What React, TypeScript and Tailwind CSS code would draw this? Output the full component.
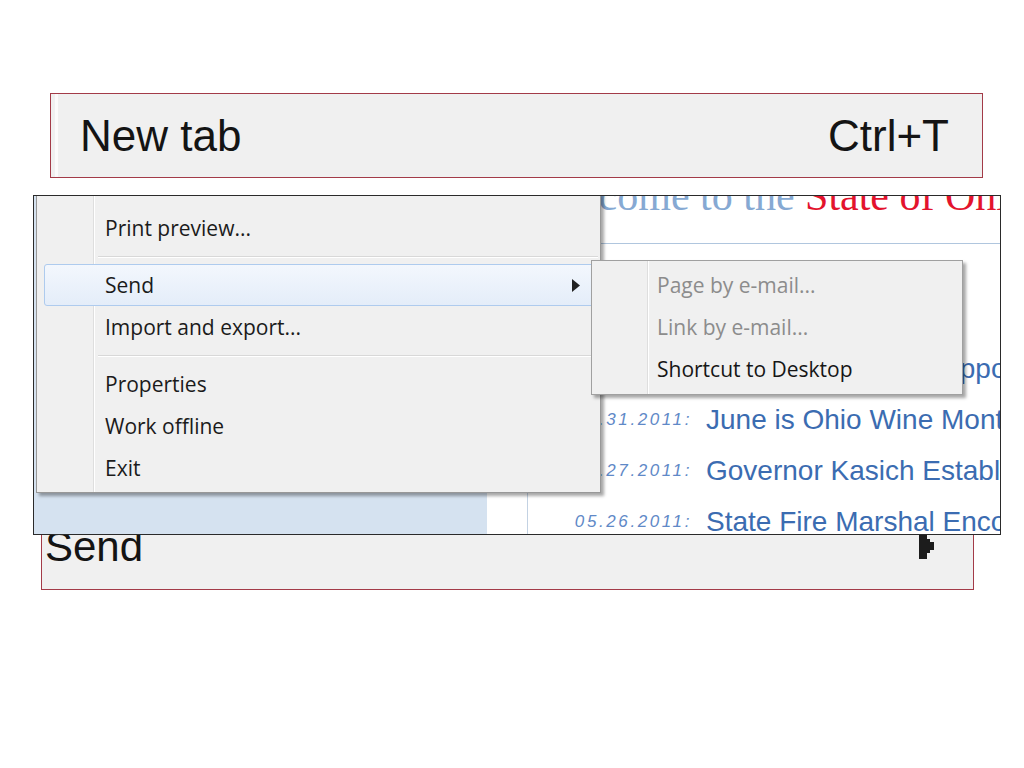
import React from "react";

const menuFont = "font-['Open_Sans',sans-serif]";

const MenuItem: React.FC<{ label: string; active?: boolean; arrow?: boolean }> = ({
  label,
  active,
  arrow,
}) => (
  <div
    className={
      "relative flex items-center h-[42px] ml-[7px] mr-[2px] pl-[60px] pr-[17px] rounded-[3px] border " +
      (active
        ? "border-[#aecbee] bg-gradient-to-b from-[#f3f7fd] to-[#e4edf9]"
        : "border-transparent")
    }
  >
    <span className="flex-1 text-[21px] text-[#1b1b1b] leading-none">{label}</span>
    {arrow && (
      <svg width="8" height="13" viewBox="0 0 8 13">
        <polygon points="0,0 8,6.5 0,13" fill="#222" />
      </svg>
    )}
  </div>
);

const Separator: React.FC = () => (
  <div className="h-[15px] flex items-center ml-[61px] mr-[2px]">
    <div className="w-full h-[2px] border-t border-[#d8d8d8] border-b border-b-white" />
  </div>
);

const SubItem: React.FC<{ label: string; disabled?: boolean }> = ({ label, disabled }) => (
  <div className="flex items-center h-[42px] mx-[3px] pl-[62px]">
    <span className={"text-[21px] leading-none " + (disabled ? "text-[#8c8c8c]" : "text-[#161616]")}>
      {label}
    </span>
  </div>
);

// rows of the page behind the menu
const news = [
  { date: "05.31.2011:", title: "Kasich Announces appointments" },
  { date: "05.31.2011:", title: "June is Ohio Wine Month" },
  { date: "05.27.2011:", title: "Governor Kasich Establishes" },
  { date: "05.26.2011:", title: "State Fire Marshal Encourages" },
];

export default function App() {
  return (
    <div className="w-[1024px] h-[768px] bg-white overflow-hidden pt-[93px]">
      {/* zoomed "New tab" item */}
      <div className="ml-[50px] w-[933px] h-[85px] flex items-center border border-[#a33b48] bg-[#f0f0f0] font-['Liberation_Sans',sans-serif] text-[44px] text-[#141414]">
        <div className="self-stretch w-[3px] ml-[4px] bg-[#fbfbfb]" />
        <span className="flex-1 pl-[22px] leading-none">New tab</span>
        <span className="pr-[33px] leading-none">Ctrl+T</span>
      </div>

      {/* browser screenshot */}
      <div className="relative z-10 mt-[17px] ml-[33px] w-[968px] h-[340px] border border-[#2a2a2a] bg-white overflow-hidden">
        <div className="flex h-full">
          <div className="w-[453px] shrink-0 bg-[#d5e2f0]" />
          <div className="w-[41px] shrink-0 bg-white border-r border-[#c3d2e3]" />
          <div className="flex-1 min-w-0 overflow-hidden flex flex-col pl-[11px]">
            <div className="h-[48px] shrink-0 border-b border-[#b0c6de] font-['Liberation_Serif',serif] text-[42px] leading-none whitespace-nowrap">
              <div className="-mt-[21px] -ml-[7px]">
                <span className="text-[#86a9d3]">Welcome to the </span>
                <span className="text-[#e3132d]">State of Ohio</span>
              </div>
            </div>
            <div className="h-[99px] shrink-0" />
            {news.map((n, i) => (
              <div key={i} className="flex items-center shrink-0 h-[51px] whitespace-nowrap font-['Liberation_Sans',sans-serif]">
                <span className="w-[153px] shrink-0 text-right italic text-[17px] tracking-[2.6px] text-[#5f89c7]">
                  {n.date}
                </span>
                <span className="ml-[14px] text-[28px] text-[#3b6cb1]">{n.title}</span>
              </div>
            ))}
          </div>
        </div>

        {/* main menu */}
        <div
          className={`absolute left-[2px] -top-[4px] w-[565px] pt-[14px] pb-[3px] border border-[#989898] bg-[#f0f0f0] shadow-[3px_3px_3px_rgba(0,0,0,0.35)] ${menuFont}`}
        >
          <div className="absolute left-[56px] top-0 bottom-0 w-[2px] border-l border-[#dedede] border-r border-r-white" />
          <MenuItem label="Print preview..." />
          <Separator />
          <MenuItem label="Send" active arrow />
          <MenuItem label="Import and export..." />
          <Separator />
          <MenuItem label="Properties" />
          <MenuItem label="Work offline" />
          <MenuItem label="Exit" />
        </div>

        {/* Send submenu */}
        <div
          className={`absolute left-[557px] top-[64px] w-[372px] pt-[3px] pb-[4px] border border-[#a0a0a0] bg-[#f0f0f0] shadow-[3px_3px_3px_rgba(0,0,0,0.35)] ${menuFont}`}
        >
          <div className="absolute left-[55px] top-0 bottom-0 w-[2px] border-l border-[#dedede] border-r border-r-white" />
          <SubItem label="Page by e-mail..." disabled />
          <SubItem label="Link by e-mail..." disabled />
          <SubItem label="Shortcut to Desktop" />
        </div>
      </div>

      {/* zoomed "Send" item */}
      <div className="-mt-[31px] ml-[41px] w-[933px] h-[86px] flex items-center justify-between border border-[#a33b48] bg-[#f0f0f0] font-['Liberation_Sans',sans-serif] text-[42px] text-[#141414] pl-[3px] pr-[38px]">
        <span className="leading-none">Send</span>
        <svg width="16" height="26" viewBox="0 0 16 26" className="-mt-[3px]">
          <polygon
            points="0,0 8,0 8,6 11,6 11,9 15,9 15,17 11,17 11,20 8,20 8,26 0,26"
            fill="#1c1c1c"
          />
        </svg>
      </div>
    </div>
  );
}
